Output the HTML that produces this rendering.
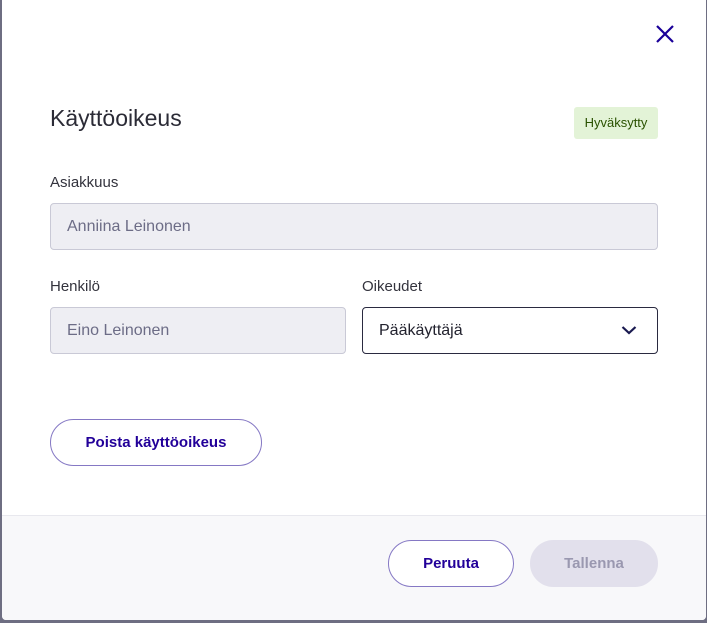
<!DOCTYPE html>
<html><head><meta charset="utf-8"><style>
*{box-sizing:border-box;margin:0;padding:0}
body{width:707px;height:623px;background:#6e6e82;font-family:"Liberation Sans",sans-serif;position:relative;overflow:hidden}
.modal{position:absolute;left:2px;top:0;width:704px;height:620px;background:#fff;border-radius:0 0 4px 4px;overflow:hidden}
.abs{position:absolute}
h1{position:absolute;left:48px;top:105px;font-size:23px;font-weight:normal;color:#2b2b36;letter-spacing:0}
.badge{left:572px;top:107px;width:84px;height:32px;background:#e3f3d7;border-radius:3px;color:#2a5200;font-size:13px;line-height:32px;text-align:center}
.lbl{font-size:15px;color:#33333d}
.inp{height:47px;border:1px solid #c9c9d6;background:#eeeef3;border-radius:4px;font-size:16px;color:#6c6c86;line-height:45px;padding-left:16px}
.btn{border:1px solid #8578c4;border-radius:24px;height:47px;font-weight:bold;font-size:15px;color:#220099;text-align:center;line-height:45px;background:#fff}
.footer{left:0;top:515px;width:704px;height:105px;background:#f8f8fa;border-top:1px solid #e8e8ee}
</style></head><body>
<div class="modal">
<svg class="abs" style="left:653px;top:24px" width="20" height="20" viewBox="0 0 20 20"><path d="M2 2L18 18M18 2L2 18" stroke="#1a0099" stroke-width="2.2" fill="none"/></svg>
<h1>Käyttöoikeus</h1>
<div class="abs badge">Hyväksytty</div>
<div class="abs lbl" style="left:48px;top:174px">Asiakkuus</div>
<div class="abs inp" style="left:48px;top:203px;width:608px">Anniina Leinonen</div>
<div class="abs lbl" style="left:48px;top:278px">Henkilö</div>
<div class="abs lbl" style="left:360px;top:278px">Oikeudet</div>
<div class="abs inp" style="left:48px;top:307px;width:296px">Eino Leinonen</div>
<div class="abs inp" style="left:360px;top:307px;width:296px;background:#fff;border-color:#2a2a40;color:#22222e">Pääkäyttäjä</div>
<svg class="abs" style="left:619px;top:324px" width="16" height="12" viewBox="0 0 16 12"><path d="M1.5 3L8 9L14.5 3" stroke="#1a1a50" stroke-width="2.2" fill="none"/></svg>
<div class="abs btn" style="left:48px;top:419px;width:212px">Poista käyttöoikeus</div>
<div class="abs footer">
<div class="abs btn" style="left:386px;top:24px;width:126px">Peruuta</div>
<div class="abs btn" style="left:528px;top:24px;width:128px;background:#e2e0ec;border-color:#e2e0ec;color:#9a98b0">Tallenna</div>
</div>
</div>
</body></html>
